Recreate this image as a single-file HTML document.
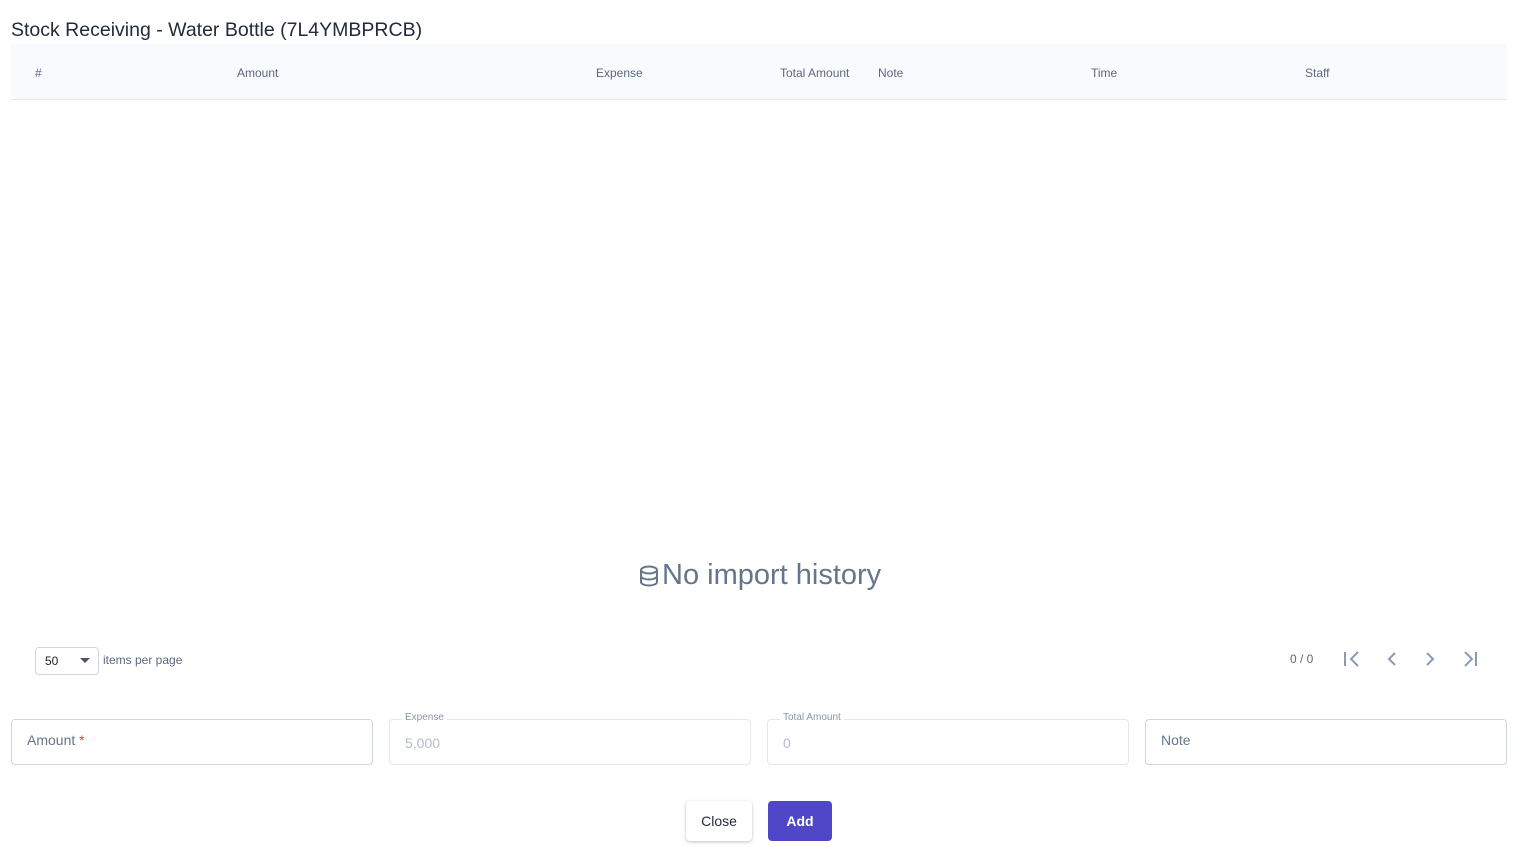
<!DOCTYPE html>
<html><head><style>
body{margin:0;width:1521px;height:859px;background:#fff;font-family:"Liberation Sans",sans-serif;position:relative;overflow:hidden}
.a{position:absolute;white-space:nowrap}
.th{top:66px;font-size:12px;color:#5b6880}
.inp{position:absolute;top:719px;width:360px;height:46px;border:1px solid #cfd6e2;border-radius:4px;box-sizing:border-box}
.inp.d{border-color:#e3e7ee}
.lbl{position:absolute;top:-8px;left:12px;background:#fff;padding:0 3px;font-size:10px;color:#8a94a6}
.val{position:absolute;left:15px;top:15px;font-size:14px;color:#b4bccb}
</style></head><body>
<div class="a" style="left:11px;top:19px;font-size:19.5px;color:#222b3a">Stock Receiving - Water Bottle (7L4YMBPRCB)</div>
<div class="a" style="left:11px;top:44px;width:1496px;height:55px;background:#f9fafd;border-bottom:1px solid #e4e7ec"></div>
<div class="a th" style="left:35px">#</div>
<div class="a th" style="left:237px">Amount</div>
<div class="a th" style="left:596px">Expense</div>
<div class="a th" style="left:780px">Total Amount</div>
<div class="a th" style="left:878px">Note</div>
<div class="a th" style="left:1091px">Time</div>
<div class="a th" style="left:1305px">Staff</div>
<div class="a" style="left:639px;top:559px;font-size:29px;color:#66758c;display:flex;align-items:center">
<svg width="20" height="22" viewBox="0 0 20 22" fill="none" stroke="#66758c" stroke-width="2"><ellipse cx="10" cy="5" rx="8" ry="3.5"/><path d="M2 5v12c0 2 3.6 3.5 8 3.5s8-1.5 8-3.5V5M2 11c0 2 3.6 3.5 8 3.5s8-1.5 8-3.5"/></svg>
<span style="margin-left:3px">No import history</span></div>
<div class="a" style="left:35px;top:647px;width:64px;height:28px;border:1px solid #cfd6e2;border-radius:4px;box-sizing:border-box">
<span class="a" style="left:9px;top:6px;font-size:12px;color:#222">50</span>
<span class="a" style="left:44px;top:10px;width:0;height:0;border-left:5px solid transparent;border-right:5px solid transparent;border-top:5px solid #4a5568"></span></div>
<div class="a" style="left:103px;top:653px;font-size:12px;color:#5b6880">items per page</div>
<div class="a" style="left:1290px;top:652px;font-size:12px;color:#5b6880">0 / 0</div>
<svg class="a" style="left:1340px;top:648px" width="150" height="22" viewBox="0 0 150 22" fill="none" stroke="#8a9ab3" stroke-width="2"><path d="M5 4v14M18 4l-7 7 7 7"/><path d="M55 5l-6 6 6 6"/><path d="M87 5l6 6-6 6"/><path d="M125 4l7 7-7 7M136 4v14"/></svg>
<div class="inp" style="left:11px;width:362px"><span class="a" style="left:15px;top:12px;font-size:14px;color:#66758c">Amount <span style="color:#e53e3e">*</span></span></div>
<div class="inp d" style="left:389px;width:362px"><span class="lbl">Expense</span><span class="val">5,000</span></div>
<div class="inp d" style="left:767px;width:362px"><span class="lbl">Total Amount</span><span class="val">0</span></div>
<div class="inp" style="left:1145px;width:362px"><span class="a" style="left:15px;top:12px;font-size:14px;color:#66758c">Note</span></div>
<div class="a" style="left:686px;top:801px;width:66px;height:40px;border-radius:4px;box-shadow:0 1px 3px rgba(0,0,0,.25);background:#fff;text-align:center;line-height:40px;font-size:14px;color:#222b3a">Close</div>
<div class="a" style="left:768px;top:801px;width:64px;height:40px;border-radius:4px;background:#4f46c8;text-align:center;line-height:40px;font-size:14px;font-weight:bold;color:#fff">Add</div>
</body></html>
